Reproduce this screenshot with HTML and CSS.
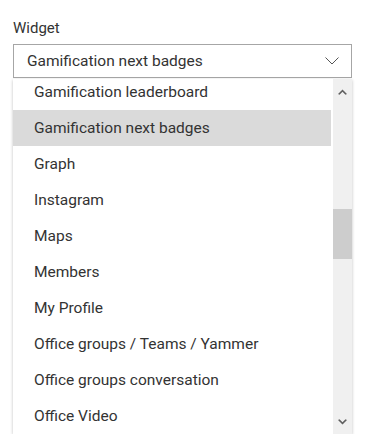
FILE: index.html
```html
<!doctype html>
<html>
<head>
  <meta charset="utf-8">
  <title>Widget picker</title>
  <link rel="stylesheet" href="styles.css">
</head>
<body>
  <div class="field">
    <label class="field-label">Widget</label>
    <div class="select">
      <span class="select-value">Gamification next badges</span>
      <svg class="select-chevron" width="14" height="8" viewBox="0 0 14 8">
        <path d="M0.5 0.5 L7 7 L13.5 0.5" fill="none" stroke="#555" stroke-width="1"/>
      </svg>
    </div>
    <div class="dropdown">
      <div class="options">
        <ul class="option-list">
          <li class="option">Gamification leaderboard</li>
          <li class="option selected">Gamification next badges</li>
          <li class="option">Graph</li>
          <li class="option">Instagram</li>
          <li class="option">Maps</li>
          <li class="option">Members</li>
          <li class="option">My Profile</li>
          <li class="option">Office groups / Teams / Yammer</li>
          <li class="option">Office groups conversation</li>
          <li class="option">Office Video</li>
        </ul>
      </div>
      <div class="scrollbar">
        <svg class="scroll-arrow" width="9" height="6" viewBox="0 0 9 6">
          <path d="M0 5 L4.5 0.5 L9 5 L7.5 5.8 L4.5 2.8 L1.5 5.8 Z" fill="#606060"/>
        </svg>
        <div class="track">
          <div class="thumb"></div>
        </div>
        <svg class="scroll-arrow" width="9" height="6" viewBox="0 0 9 6">
          <path d="M0 1 L4.5 5.5 L9 1 L7.5 0.2 L4.5 3.2 L1.5 0.2 Z" fill="#606060"/>
        </svg>
      </div>
    </div>
  </div>
</body>
</html>
```

FILE: styles.css
```css
body {
  margin: 0;
  background: #fff;
  font-family: Roboto, "Liberation Sans", sans-serif;
  color: #333;
}
.field {
  padding: 19px 0 0 13px;
  width: 339px;
}
.field-label {
  display: block;
  font-size: 15px;
  line-height: 19px;
  margin-bottom: 6px;
}
.select {
  height: 32px;
  border: 1px solid #a6a6a6;
  display: flex;
  align-items: center;
  justify-content: space-between;
  padding: 0 12px 0 13px;
}
.select-value {
  font-size: 15.5px;
}
.select-chevron {
  display: block;
}
.dropdown {
  margin-top: 1px;
  height: 355px;
  display: flex;
  background: #fff;
  box-shadow: 0 1px 3px rgba(0, 0, 0, 0.25);
}
.options {
  flex: 1;
  overflow: hidden;
}
.option-list {
  list-style: none;
  margin: -5px 0 0 0;
  padding: 0;
}
.option {
  height: 36px;
  line-height: 36px;
  padding-left: 21px;
  font-size: 15.5px;
  margin-right: 2px;
}
.option.selected {
  background: #dadada;
}
.scrollbar {
  width: 19px;
  background: #f0f0f0;
  display: flex;
  flex-direction: column;
  align-items: center;
  padding: 10px 0 9px;
}
.scroll-arrow {
  display: block;
}
.track {
  flex: 1;
  width: 100%;
  padding-top: 114px;
}
.thumb {
  height: 50px;
  background: #cdcdcd;
}
```
